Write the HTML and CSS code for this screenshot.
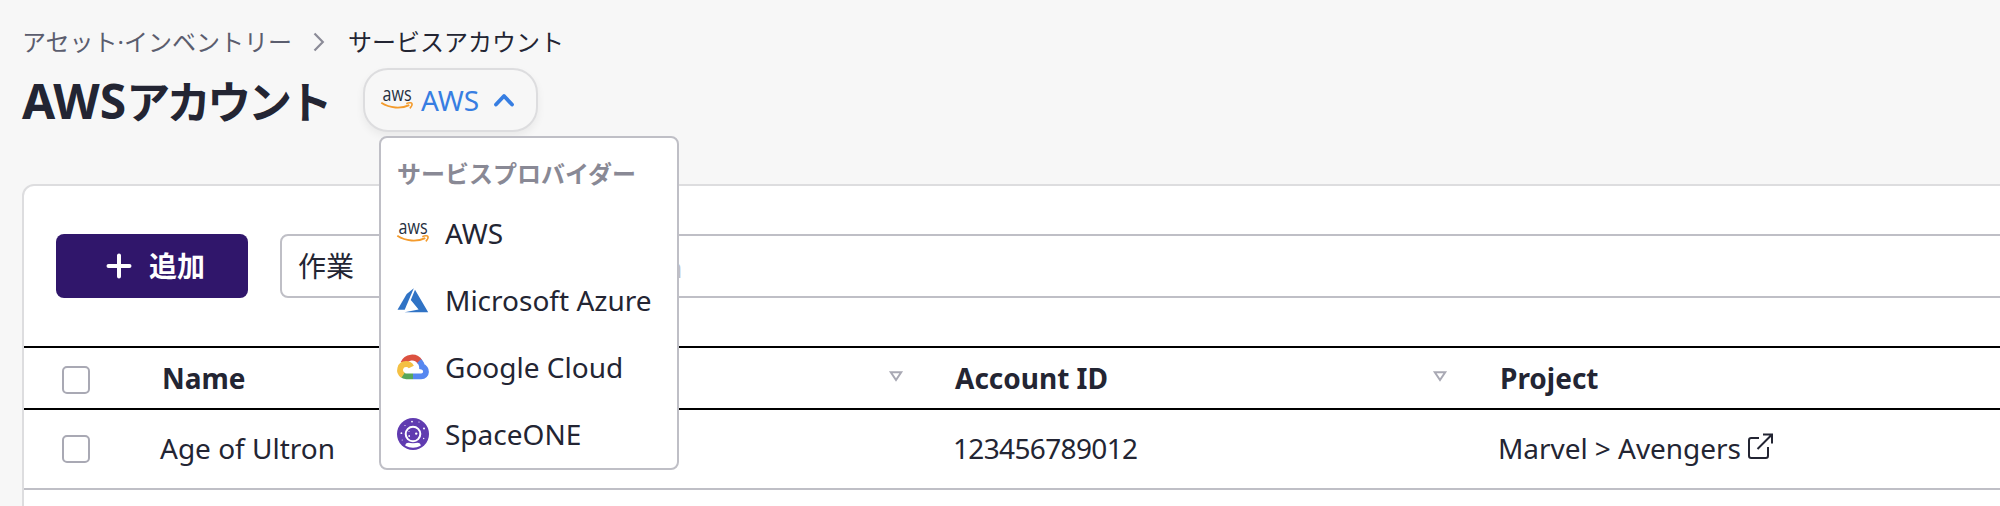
FILE: index.html
```html
<!DOCTYPE html>
<html lang="ja">
<head>
<meta charset="utf-8">
<title>AWSアカウント</title>
<link rel="stylesheet" href="styles.css">
</head>
<body>
<main class="page">
  <nav class="breadcrumb">
    <span class="crumb">アセット·インベントリー</span>
    <svg class="crumb-sep" width="12" height="20" viewBox="0 0 12 20"><path d="M1.5 1.5 9.8 10l-8.3 8.5" fill="none" stroke="#8b8b97" stroke-width="2.2"/></svg>
    <span class="crumb current">サービスアカウント</span>
  </nav>
  <header class="heading">
    <h1 class="title">AWS<span class="title-kana">アカウント</span></h1>
    <div class="provider">
      <button class="pill">
        <svg class="pill-logo" width="32" height="32" viewBox="0 0 32 32">
          <text class="aws-word" x="1.6" y="17" textLength="29" lengthAdjust="spacingAndGlyphs">aws</text>
          <path d="M.3 18.8C9 24.4 20 25 28.3 21.2" fill="none" stroke="#f49b2c" stroke-width="1.9"/>
          <path d="M25.3 19.7c2.4-1.1 5.2-1.1 5.6-.4.4 1-.5 3.6-2.1 5.1" fill="none" stroke="#f49b2c" stroke-width="1.5"/>
        </svg>
        <span>AWS</span>
        <svg class="pill-arrow" width="20" height="14" viewBox="0 0 20 14"><path d="M2 11.5 10 3l8 8.5" fill="none" stroke="#377ee2" stroke-width="3.8" stroke-linecap="round" stroke-linejoin="round"/></svg>
      </button>
      <div class="menu">
        <div class="menu-title">サービスプロバイダー</div>
        <div class="option">
          <svg width="32" height="32" viewBox="0 0 32 32">
            <text class="aws-word" x="1.6" y="17" textLength="29" lengthAdjust="spacingAndGlyphs">aws</text>
            <path d="M.3 18.8C9 24.4 20 25 28.3 21.2" fill="none" stroke="#f49b2c" stroke-width="1.9"/>
            <path d="M25.3 19.7c2.4-1.1 5.2-1.1 5.6-.4.4 1-.5 3.6-2.1 5.1" fill="none" stroke="#f49b2c" stroke-width="1.5"/>
          </svg>
          <span>AWS</span>
        </div>
        <div class="option">
          <svg width="32" height="32" viewBox="0 0 32 32"><path d="M16.8 4.2 9.7 10 .5 25.8h7.2z" fill="#3073c5"/><path d="m18 5.7-4.2 10.4 7.8 9.4-14 2.8h23.6z" fill="#3073c5"/></svg>
          <span>Microsoft Azure</span>
        </div>
        <div class="option">
          <svg width="32" height="32" viewBox="0 0 32 32" fill="none" stroke-width="5.8">
            <path d="M6.4 12.2C9.1 5.6 18.7 4.1 23 11" stroke="#dc5140"/>
            <path d="M22.1 10c2.1 2 2.8 3.8 2.9 5.7 5.5 1.1 5.5 9.6-.9 9.6H16" stroke="#5687f0"/>
            <path d="M16 25.3H9.3c-1.7 0-3.1-.6-4.2-1.6" stroke="#57a65a"/>
            <path d="M6 24.4C.8 20.9 2.9 13 9 13c2.2 0 4.2.9 5.3 3" stroke="#f4c043"/>
          </svg>
          <span>Google Cloud</span>
        </div>
        <div class="option">
          <svg width="32" height="32" viewBox="0 0 32 32">
            <circle cx="16" cy="16" r="16" fill="#603bb0"/>
            <path d="M8.3 27.7q0-3 3.2-3h9q3.2 0 3.2 3Q16 32 8.3 27.7z" fill="#fff"/>
            <circle cx="16" cy="16" r="9.3" fill="#603bb0"/>
            <circle cx="16" cy="16" r="7.3" fill="#603bb0" stroke="#fff" stroke-width="2"/>
            <g fill="#fff"><circle cx="12.2" cy="18" r=".9"/><circle cx="19.2" cy="15.6" r="1.2"/><circle cx="12" cy="13.4" r=".5"/><circle cx="15" cy="3.6" r=".9"/><circle cx="22" cy="4" r=".6"/><circle cx="27" cy="10.6" r="1"/><circle cx="4.4" cy="15.2" r=".9"/><circle cx="8" cy="7.5" r=".6"/><circle cx="26.7" cy="20.5" r=".7"/><circle cx="5.2" cy="22" r=".5"/></g>
          </svg>
          <span>SpaceONE</span>
        </div>
      </div>
    </div>
  </header>
  <section class="panel">
    <div class="toolbar">
      <button class="add">
        <svg width="26" height="26" viewBox="0 0 26 26"><path d="M13 2.5v21M2.5 13h21" stroke="#fff" stroke-width="4" stroke-linecap="round"/></svg>
        <span>追加</span>
      </button>
      <div class="search"><span>作業</span><span class="placeholder">Search</span></div>
    </div>
    <div class="row head">
      <div class="check"></div>
      <div class="cell name">Name<svg class="sort" width="14" height="11" viewBox="0 0 14 11"><path d="M1.8 1.3h10.4L7 9z" fill="none" stroke="#a9a9b4" stroke-width="2"/></svg></div>
      <div class="cell account">Account ID<svg class="sort" width="14" height="11" viewBox="0 0 14 11"><path d="M1.8 1.3h10.4L7 9z" fill="none" stroke="#a9a9b4" stroke-width="2"/></svg></div>
      <div class="cell">Project</div>
    </div>
    <div class="row body">
      <div class="check"></div>
      <div class="cell name">Age of Ultron</div>
      <div class="cell account digits">123456789012</div>
      <div class="cell project">Marvel &gt; Avengers<svg class="external" width="27" height="27" viewBox="0 0 27 27"><path d="M12 5H4.2Q2 5 2 7.2v15.6Q2 25 4.2 25h14.6q2.2 0 2.2-2.2V14M16 1.5h9v9M25 1.5 10.5 16" fill="none" stroke="#232533" stroke-width="2"/></svg></div>
    </div>
  </section>
</main>
</body>
</html>
```
FILE: styles.css
```css
* { box-sizing: border-box; }
body {
  margin: 0;
  background: #f7f7f7;
  color: #232533;
  font: 28px/40px "Noto Sans", "Noto Sans CJK JP", sans-serif;
}
svg { display: block; flex: none; overflow: visible; }
button { font: inherit; }
.page { height: 506px; overflow: hidden; padding: 24px 0 0 22px; }
.aws-word { font: 400 20px "Open Sans", sans-serif; fill: #252f3e; }

.breadcrumb { display: flex; align-items: center; height: 36px; font-size: 24px; line-height: 36px; white-space: nowrap; }
.crumb { color: #5b5d6e; }
.crumb.current { color: #232533; }
.crumb-sep { margin: 0 23px 0 21px; }

.heading { display: flex; height: 124px; padding-top: 8px; }
.title { margin: 0; width: 341px; font-size: 48px; line-height: 66px; font-weight: 700; white-space: nowrap; }
.title-kana { font-size: 44px; letter-spacing: -3.4px; }
.provider { position: relative; height: 64px; }
.pill {
  display: flex;
  align-items: center;
  width: 175px;
  height: 64px;
  padding: 0 0 0 16px;
  border: 2px solid #dddddf;
  border-radius: 25px;
  background: #f7f7f7;
  box-shadow: 0 4px 8px rgba(0, 0, 0, .06);
  color: #377ee2;
}
.pill-logo { margin-right: 8px; }
.pill-arrow { margin-left: 15px; }

.menu {
  position: absolute;
  z-index: 1;
  top: 68px;
  left: 16px;
  width: 300px;
  height: 334px;
  padding: 16px 16px 0;
  border: 2px solid #bfbfc6;
  border-radius: 8px;
  background: #fff;
}
.menu-title { height: 45px; color: #898995; font-size: 24px; font-weight: 700; white-space: nowrap; }
.option { display: flex; align-items: center; gap: 16px; height: 67px; white-space: nowrap; }

.panel { width: 2100px; height: 400px; border: 2px solid #dddddf; border-radius: 12px; background: #fff; }
.toolbar { display: flex; gap: 32px; height: 160px; padding: 48px 0 0 32px; }
.add {
  display: flex;
  align-items: center;
  width: 192px;
  height: 64px;
  gap: 17px;
  padding: 0 0 0 50px;
  border: 0;
  border-radius: 8px;
  background: #30166b;
  color: #fff;
  font-weight: 700;
}
.search { display: flex; align-items: center; flex: 1; height: 64px; padding-left: 16px; border: 2px solid #bfbfc6; border-radius: 8px; }
.placeholder { margin: 1px 0 0 240px; color: #bfbfc6; }

.row { display: flex; align-items: center; padding-left: 38px; }
.head { height: 64px; border: solid #000; border-width: 2px 0; font-weight: 700; }
.body { height: 80px; border-bottom: 2px solid #bfbfc6; }
.check { width: 28px; height: 28px; margin-right: 72px; border: 2px solid #a9a9b4; border-radius: 5px; }
.head .check { margin-top: 3px; }
.body .check { margin-right: 70px; }
.body .cell { margin-top: -2px; }
.cell { display: flex; white-space: nowrap; }
.name { width: 793px; }
.account { width: 545px; }
.digits { letter-spacing: -.65px; }
.project { letter-spacing: -.05px; }
.sort { margin: 13px 53px 0 auto; }
.name .sort { margin-right: 52px; }
.external { margin: 5px 0 0 6px; }
```
